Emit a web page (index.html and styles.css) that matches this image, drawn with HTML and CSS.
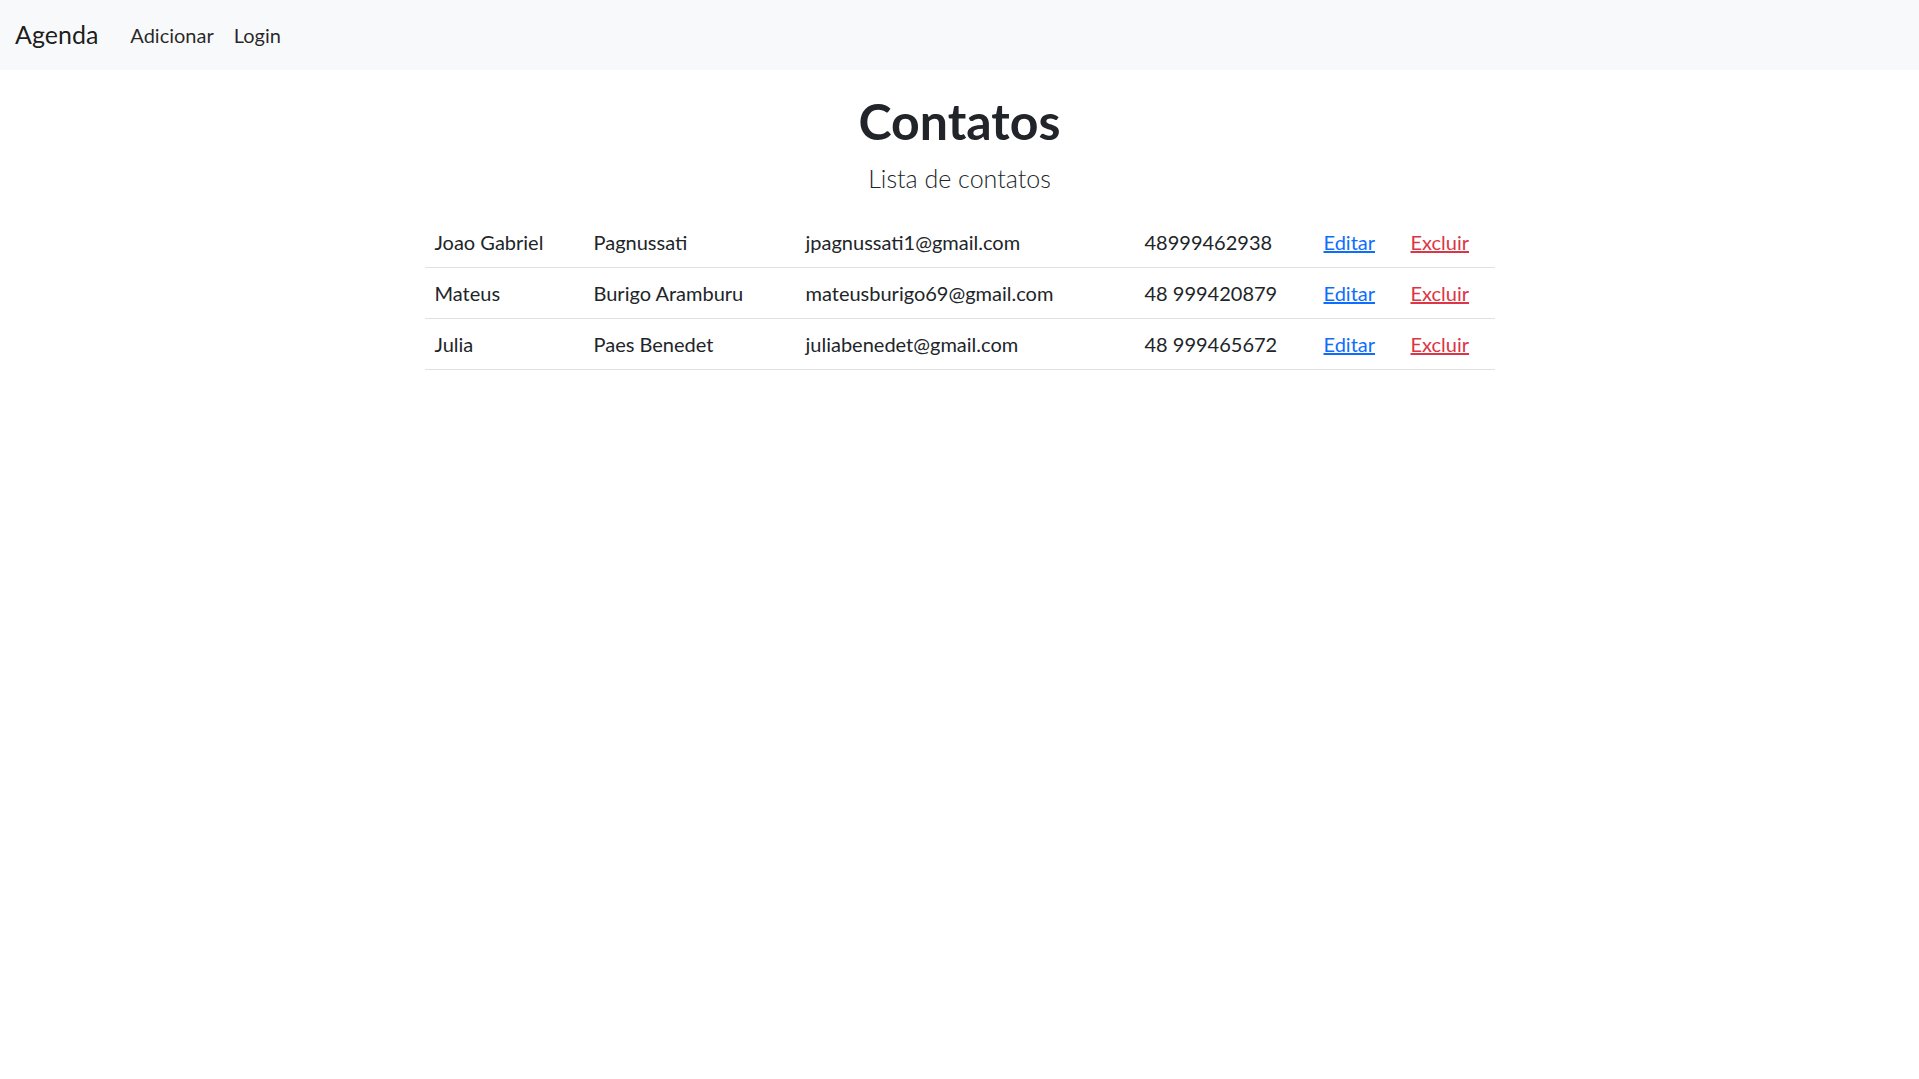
FILE: index.html
```html
<!DOCTYPE html>
<html lang="pt-br">
<head>
<meta charset="utf-8">
<title>Agenda</title>
<link rel="stylesheet" href="styles.css">
</head>
<body>
<nav class="navbar">
  <a class="brand" href="#">Agenda</a>
  <ul class="nav">
    <li><a class="nav-link" href="#">Adicionar</a></li>
    <li><a class="nav-link" href="#">Login</a></li>
  </ul>
</nav>
<main class="container">
  <h1 class="title">Contatos</h1>
  <p class="lead">Lista de contatos</p>
  <table class="table">
    <colgroup>
      <col class="c1"><col class="c2"><col class="c3"><col class="c4"><col class="c5"><col class="c6">
    </colgroup>
    <tbody>
      <tr>
        <td>Joao Gabriel</td>
        <td>Pagnussati</td>
        <td>jpagnussati1@gmail.com</td>
        <td>48999462938</td>
        <td><a class="link-edit" href="#">Editar</a></td>
        <td><a class="link-del" href="#">Excluir</a></td>
      </tr>
      <tr>
        <td>Mateus</td>
        <td>Burigo Aramburu</td>
        <td>mateusburigo69@gmail.com</td>
        <td>48 999420879</td>
        <td><a class="link-edit" href="#">Editar</a></td>
        <td><a class="link-del" href="#">Excluir</a></td>
      </tr>
      <tr>
        <td>Julia</td>
        <td>Paes Benedet</td>
        <td>juliabenedet@gmail.com</td>
        <td>48 999465672</td>
        <td><a class="link-edit" href="#">Editar</a></td>
        <td><a class="link-del" href="#">Excluir</a></td>
      </tr>
    </tbody>
  </table>
</main>
</body>
</html>
```
FILE: styles.css
```css
* { box-sizing: border-box; }
html, body { margin: 0; padding: 0; }
body {
  font-family: Lato, "Open Sans", "Noto Sans", sans-serif;
  font-size: 20px;
  line-height: 1.5;
  color: #212529;
  background: #fff;
}
a { text-decoration: none; }

.navbar {
  display: flex;
  align-items: center;
  height: 70px;
  padding: 0 15px;
  background: #f8f9fa;
}
.brand {
  font-size: 25px;
  color: rgba(0, 0, 0, 0.9);
  margin-right: 22px;
  line-height: 1.5;
}
.nav {
  display: flex;
  list-style: none;
  margin: 0;
  padding: 0;
}
.nav-link {
  display: block;
  padding: 10px 10px;
  color: rgba(0, 0, 0, 0.85);
}

.container {
  width: 1070px;
  margin: 0 auto;
  padding-top: 21px;
}
.title {
  margin: 0 0 9px;
  font-size: 50px;
  font-weight: 700;
  line-height: 60px;
  text-align: center;
}
.lead {
  margin: 0 0 20px;
  font-size: 25px;
  font-weight: 300;
  line-height: 37px;
  text-align: center;
}
.table {
  width: 1070px;
  border-collapse: collapse;
  table-layout: fixed;
}
.table td {
  padding: 10px;
  height: 50.5px;
  border-bottom: 1.25px solid #dee2e6;
  vertical-align: middle;
  white-space: nowrap;
}
.c1 { width: 159px; }
.c2 { width: 212px; }
.c3 { width: 339px; }
.c4 { width: 179px; }
.c5 { width: 87px; }
.c6 { width: 94px; }
.link-edit { color: #0d6efd; text-decoration: underline; }
.link-del { color: #dc3545; text-decoration: underline; }
```
